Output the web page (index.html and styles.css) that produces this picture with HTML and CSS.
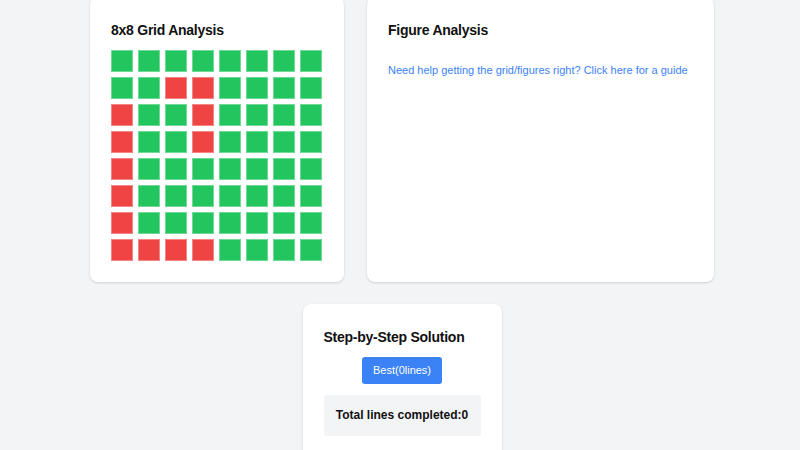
FILE: index.html
```html
<!DOCTYPE html>
<html>
<head>
<meta charset="utf-8">
<link rel="stylesheet" href="styles.css">
</head>
<body>
<main class="page">
  <div class="top-row">
    <section class="card grid-card">
      <h2 class="card-title">8x8 Grid Analysis</h2>
      <div class="grid">
        <div class="cell g"></div><div class="cell g"></div><div class="cell g"></div><div class="cell g"></div><div class="cell g"></div><div class="cell g"></div><div class="cell g"></div><div class="cell g"></div>
        <div class="cell g"></div><div class="cell g"></div><div class="cell r"></div><div class="cell r"></div><div class="cell g"></div><div class="cell g"></div><div class="cell g"></div><div class="cell g"></div>
        <div class="cell r"></div><div class="cell g"></div><div class="cell g"></div><div class="cell r"></div><div class="cell g"></div><div class="cell g"></div><div class="cell g"></div><div class="cell g"></div>
        <div class="cell r"></div><div class="cell g"></div><div class="cell g"></div><div class="cell r"></div><div class="cell g"></div><div class="cell g"></div><div class="cell g"></div><div class="cell g"></div>
        <div class="cell r"></div><div class="cell g"></div><div class="cell g"></div><div class="cell g"></div><div class="cell g"></div><div class="cell g"></div><div class="cell g"></div><div class="cell g"></div>
        <div class="cell r"></div><div class="cell g"></div><div class="cell g"></div><div class="cell g"></div><div class="cell g"></div><div class="cell g"></div><div class="cell g"></div><div class="cell g"></div>
        <div class="cell r"></div><div class="cell g"></div><div class="cell g"></div><div class="cell g"></div><div class="cell g"></div><div class="cell g"></div><div class="cell g"></div><div class="cell g"></div>
        <div class="cell r"></div><div class="cell r"></div><div class="cell r"></div><div class="cell r"></div><div class="cell g"></div><div class="cell g"></div><div class="cell g"></div><div class="cell g"></div>
      </div>
    </section>
    <section class="card figure-card">
      <h2 class="card-title">Figure Analysis</h2>
      <a class="guide-link" href="#">Need help getting the grid/figures right? Click here for a guide</a>
    </section>
  </div>
  <section class="card solution-card">
    <h2 class="card-title">Step-by-Step Solution</h2>
    <div class="btn-row"><button class="btn">Best(0lines)</button></div>
    <div class="total">Total lines completed:0</div>
  </section>
</main>
</body>
</html>
```
FILE: styles.css
```css
* { box-sizing: border-box; }
html, body { margin: 0; padding: 0; }
body {
  background: #f3f4f6;
  font-family: "Liberation Sans", Arial, sans-serif;
  color: #111;
  overflow: hidden;
}
.page {
  display: flex;
  flex-direction: column;
  align-items: center;
  gap: 22px;
  margin-top: -3px;
  padding-left: 4px;
}
.top-row {
  display: flex;
  gap: 23px;
  align-items: stretch;
}
.card {
  background: #fff;
  border-radius: 8px;
  box-shadow: 0 1px 3px rgba(0,0,0,0.1), 0 1px 2px rgba(0,0,0,0.06);
  padding: 21px;
}
.card-title {
  margin: 0;
  font-size: 14px;
  letter-spacing: -0.25px;
  line-height: 24px;
  font-weight: 700;
  white-space: nowrap;
}
.grid-card { width: 254px; }
.grid {
  margin-top: 8px;
  display: grid;
  grid-template-columns: repeat(8, 22px);
  grid-auto-rows: 22px;
  gap: 5px;
}
.cell {
  border: 1px solid rgba(255,255,255,0.35);
}
.cell.g { background: #22c55e; }
.cell.r { background: #ef4444; }
.figure-card { width: 347px; }
.guide-link {
  display: block;
  margin-top: 19px;
  font-size: 11px;
  line-height: 18px;
  color: #3b82f6;
  text-decoration: none;
  white-space: nowrap;
}
.solution-card { width: 199px; height: 200px; }
.btn-row {
  display: flex;
  justify-content: center;
  margin-top: 8px;
}
.btn {
  background: #3b82f6;
  color: #fff;
  border: none;
  border-radius: 3px;
  font-family: "Liberation Sans", Arial, sans-serif;
  font-size: 11px;
  line-height: 17px;
  padding: 5px 0;
  height: 27px;
  width: 80px;
}
.total {
  margin-top: 11px;
  background: #f3f4f6;
  border-radius: 3px;
  padding: 10px 4px;
  text-align: center;
  font-weight: 700;
  font-size: 12px;
  line-height: 21px;
  white-space: nowrap;
}
```
